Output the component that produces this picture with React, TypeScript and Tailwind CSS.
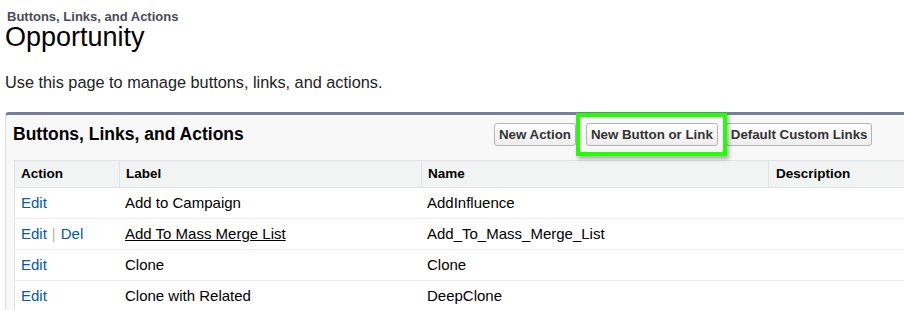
const rows = [
  { del: false, label: 'Add to Campaign', name: 'AddInfluence', underline: false },
  { del: true, label: 'Add To Mass Merge List', name: 'Add_To_Mass_Merge_List', underline: true },
  { del: false, label: 'Clone', name: 'Clone', underline: false },
  { del: false, label: 'Clone with Related', name: 'DeepClone', underline: false },
];

function Btn({ children }: { children: React.ReactNode }) {
  return (
    <button className="h-[23px] px-[4px] border border-[#b5b5b5] rounded-[3px] bg-gradient-to-b from-white to-[#ededed] text-[13.3px] leading-[15px] font-bold text-[#333]">
      {children}
    </button>
  );
}

export default function App() {
  return (
    <div
      className="w-[904px] h-[310px] overflow-hidden bg-white text-black"
      style={{ fontFamily: '"Liberation Sans", Arial, sans-serif' }}
    >
      <div className="pl-[7px] pt-[10px]">
        <div className="text-[13px] leading-[13px] font-bold text-[#4a4a56]">Buttons, Links, and Actions</div>
      </div>
      <div className="pl-[5px]">
        <h1 className="mt-[1px] text-[27px] leading-[27px] text-black">Opportunity</h1>
        <p className="mt-[22px] text-[16.3px] leading-[18px] text-[#222]">
          Use this page to manage buttons, links, and actions.
        </p>
      </div>

      <div className="ml-[5px] mt-[21px] w-[940px] bg-[#f8f8f8] border-t-[3px] border-t-[#747e96] border-l border-l-[#e0e0e0] rounded-tl-[4px]">
        <div className="flex items-center h-[38px]">
          <div className="w-[488px] pl-[7px] text-[17.5px] font-bold text-black">Buttons, Links, and Actions</div>
          <div className="flex items-center">
            <Btn>New Action</Btn>
            <div className="relative ml-[10px]">
              <Btn>New Button or Link</Btn>
              <div className="absolute -left-[10px] -right-[9px] -top-[9px] -bottom-[10px] border-4 border-[#22ff00] shadow-[2px_3px_4px_rgba(0,0,0,0.3)]" />
            </div>
            <div className="ml-[8px]">
              <Btn>Default Custom Links</Btn>
            </div>
          </div>
        </div>

        <div className="ml-[8px] mt-[7px] bg-white border-t border-l border-[#e0e3e5]">
          <div className="flex h-[27px] bg-[#f2f3f3] border-b border-[#e0e3e5] text-[13.5px] font-bold text-black">
            <div className="w-[104px] pl-[6px] flex items-center">Action</div>
            <div className="w-[302px] pl-[6px] flex items-center border-l border-[#e0e3e5]">Label</div>
            <div className="w-[347px] pl-[6px] flex items-center border-l border-[#e0e3e5]">Name</div>
            <div className="flex-1 pl-[7px] flex items-center border-l border-[#e0e3e5]">Description</div>
          </div>
          {rows.map((r, i) => (
            <div key={i} className="flex h-[31px] border-b border-[#ececec] text-[15px] items-center">
              <div className="w-[104px] pl-[6px] text-[#015ba7]">
                Edit
                {r.del && (
                  <>
                    <span className="text-[#c2b39c] mx-[5px]">|</span>
                    Del
                  </>
                )}
              </div>
              <div className={'w-[302px] pl-[6px] text-black' + (r.underline ? ' underline' : '')}>{r.label}</div>
              <div className="w-[347px] pl-[6px] text-black">{r.name}</div>
              <div className="flex-1" />
            </div>
          ))}
        </div>
      </div>
    </div>
  );
}
